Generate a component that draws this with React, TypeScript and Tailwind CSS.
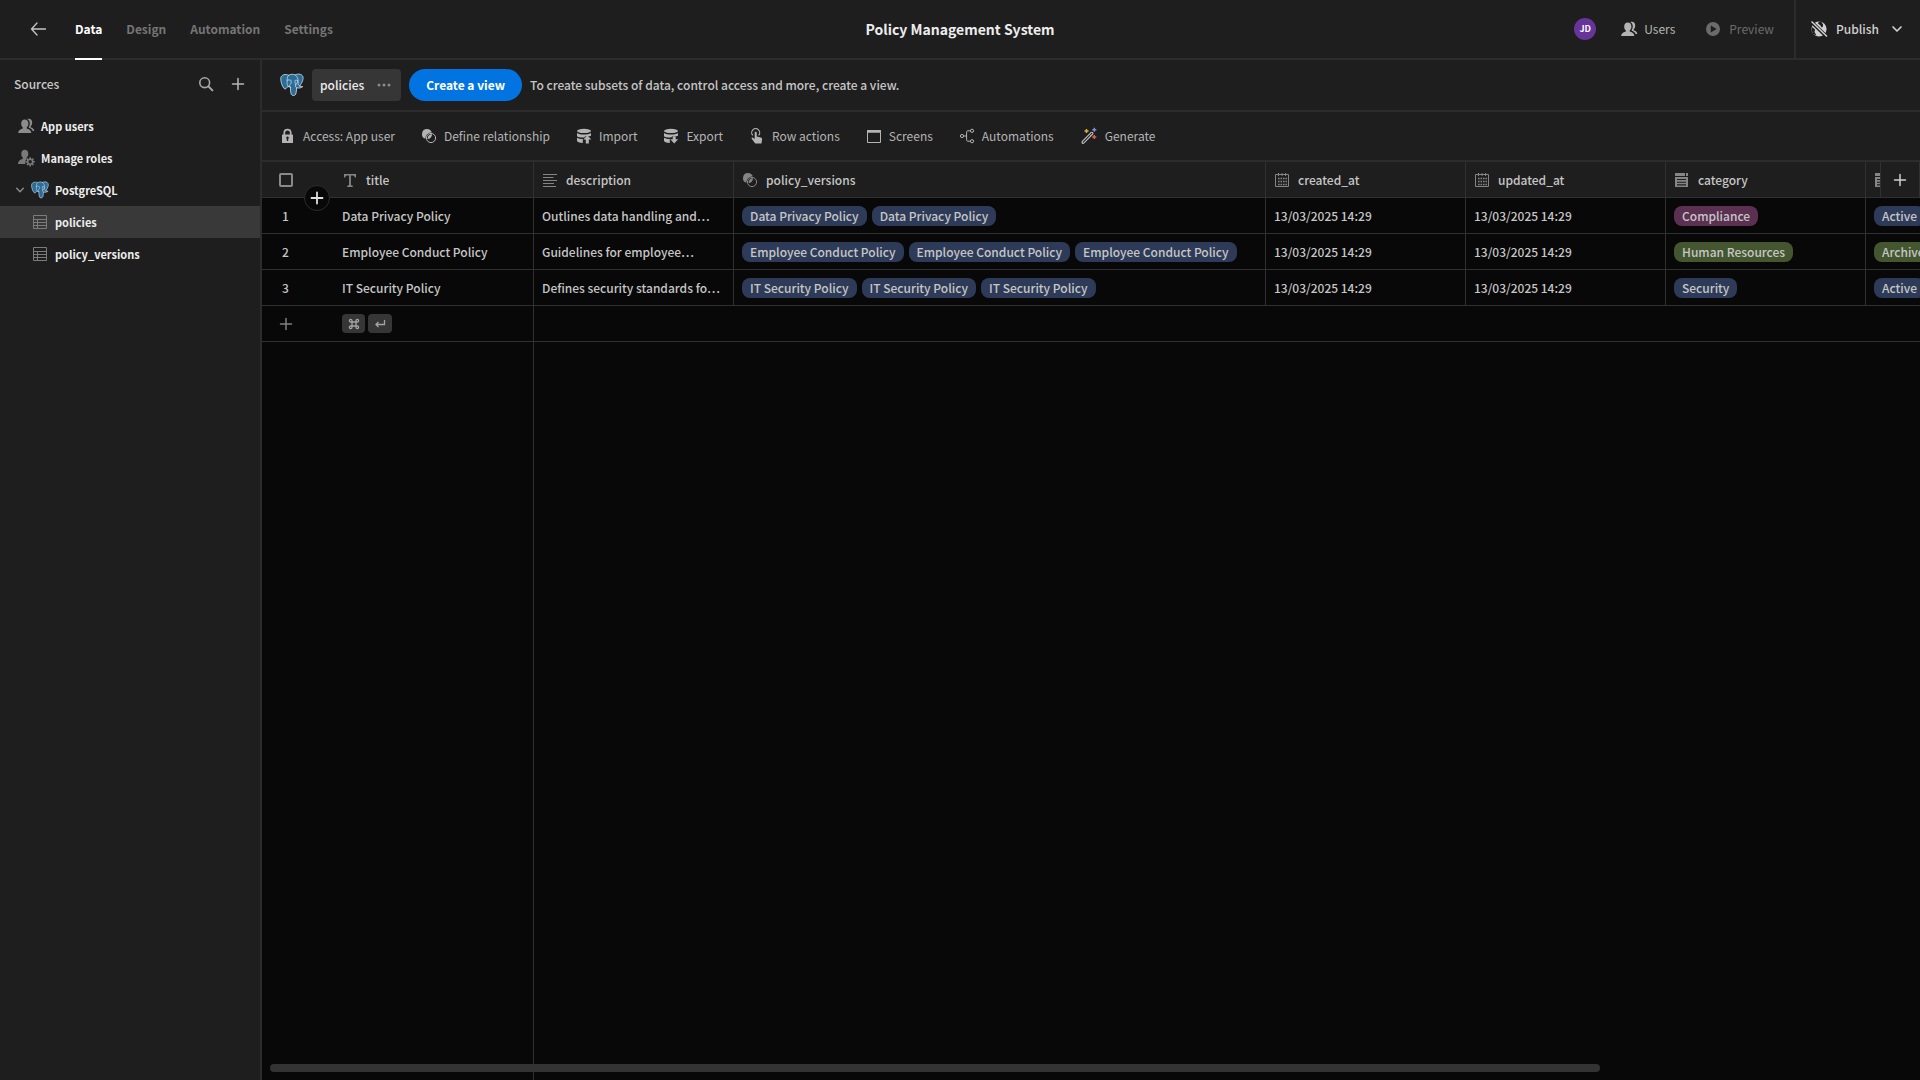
import type { ReactNode } from 'react';

type IconProps = { className?: string };

const FONT = "font-['Noto_Sans_CJK_SC','Open_Sans',sans-serif]";

function PostgresLogo({ className = '' }: IconProps) {
  return (
    <svg viewBox="0 0 24 24" fill="none" className={`shrink-0 ${className}`} aria-hidden="true">
      <path
        d="M8.6 2.2C5.6.8 1.4 1.4.8 5c-.4 3 1.400 8.600 3.200 10.400 1 .9 1.900.5 2.700-.5l1.300-1.500c.8.700 1.700.7 2.500.7 0 2.500-.1 5 .8 7.300.6 1.500 3.700 1.600 4.500-.3.7-1.900.6-4.500.8-6.300 2.300.5 4.600.2 6.200-1.200-1 .1-2.400.2-3.100-.4C22 9.500 24 5.800 22.700 3.200 21.300.7 17.600.7 15.200 1.900 13 .9 10.700 1.200 8.600 2.200Z"
        fill="#2c6d98"
        stroke="#d5e3ec"
        strokeWidth=".8"
        strokeLinejoin="round"
      />
      <path
        d="M8.600 2.200C6.900 4 7.200 7 7.100 9.200 7 10.700 7.300 12.400 8 13.400M15.200 1.900c2.200 1.500 3.200 4.300 2.900 6.800-.2 1.700-.1 3.300 1.600 4.500M10.500 14.100c-1.700-.2-1.800-1.700-.6-2.300 1.200-.7 1.500-1.800 1.200-4.300-.9-.7-2.900-.9-4-.1M16.600 14.800c-1-.6-1.700-1.300-.9-2.600.6-1.300 1.800-2.500 2.300-4.500-1-.7-2.200-.6-3.200 0 .1 1.700.5 3 .900 4.500"
        stroke="#d5e3ec"
        strokeWidth=".7"
        strokeLinecap="round"
      />
    </svg>
  );
}

function UsersIcon({ className = '' }: IconProps) {
  return (
    <svg viewBox="0 0 18 18" fill="currentColor" className={`shrink-0 ${className}`} aria-hidden="true">
      <path d="M7.800 2.600c2.100 0 3.600 1.500 3.600 3.900 0 1.700-.6 3-1.500 3.800-.5.5-.3 1.300.3 1.500 2.300.7 4 1.700 4.100 4.200H1.200c.1-2.500 1.800-3.500 4.100-4.200.7-.2.800-1 .3-1.500-.9-.8-1.400-2.100-1.400-3.800 0-2.400 1.500-3.900 3.600-3.900Z" />
      <path d="M10.200 2.100c.5-.3 1.100-.4 1.700-.4 2 0 3.300 1.500 3.300 3.700 0 1.600-.5 2.700-1.300 3.600-.5.5-.3 1.200.3 1.400 1.800.6 2.900 1.500 3.100 3.600h-1.700c-.6-1.700-2-2.600-3.700-3.200l-.3-.7c.8-1 1.200-2.200 1.200-3.600 0-1.900-.9-3.500-2.600-4.400Z" />
    </svg>
  );
}

function RolesIcon({ className = '' }: IconProps) {
  return (
    <svg viewBox="0 0 18 18" fill="currentColor" className={`shrink-0 ${className}`} aria-hidden="true">
      <path d="M7.800.8c2 0 3.500 1.500 3.500 3.900 0 1.700-.6 3-1.500 3.800-.4.4-.3 1.100 0 1.500-1.400 1.300-1.800 3-1.400 5H1c0-2.800 1.700-4.400 4.300-5.100.7-.2.800-.9.3-1.400-.8-.8-1.300-2.100-1.300-3.800C4.300 2.300 5.800.8 7.800.8Z" />
      <circle cx="13.200" cy="12.800" r="2.500" fill="none" stroke="currentColor" strokeWidth="1.600" />
      <path
        d="M13.200 8.200v1.700M13.200 15.700v1.700M8.600 12.800h1.700M16.100 12.800h1.700M9.950 9.550l1.200 1.200M15.250 14.850l1.200 1.200M16.450 9.550l-1.200 1.200M11.150 14.850l-1.200 1.200"
        stroke="currentColor"
        strokeWidth="1.600"
      />
    </svg>
  );
}

function PlusIcon({ className = '', weight = 1.5 }: IconProps & { weight?: number }) {
  return (
    <svg viewBox="0 0 16 16" fill="none" stroke="currentColor" strokeWidth={weight} strokeLinecap="round" className={`shrink-0 ${className}`} aria-hidden="true">
      <path d="M8 2.500v11M2.500 8h11" />
    </svg>
  );
}

function ChevronIcon({ className = '' }: IconProps) {
  return (
    <svg viewBox="0 0 12 12" fill="none" stroke="currentColor" strokeWidth="1.700" strokeLinecap="round" strokeLinejoin="round" className={`shrink-0 ${className}`} aria-hidden="true">
      <path d="m2 4 4 4 4-4" />
    </svg>
  );
}

function TableIcon() {
  return (
    <svg viewBox="0 0 16 16" fill="none" stroke="currentColor" className="size-4 shrink-0" aria-hidden="true">
      <path d="M1.500 1.500h13v13h-13zM1.500 5.500h13M1.500 8.500h13M1.500 11.500h13M5.500 5.500v9" />
    </svg>
  );
}

function LockIcon() {
  return (
    <svg viewBox="0 0 16 16" className="size-4 shrink-0" aria-hidden="true">
      <path d="M4.300 7V4.800a3.200 3.200 0 0 1 6.400 0V7" fill="none" stroke="currentColor" strokeWidth="1.700" />
      <path
        fillRule="evenodd"
        fill="currentColor"
        d="M2.600 6.500h9.800c.4 0 .6.3.6.600v7.300c0 .4-.2.600-.6.600H2.600c-.4 0-.6-.2-.6-.6V7.100c0-.3.200-.6.600-.6Zm4.900 2a1.300 1.300 0 0 0-.7 2.400v2.200h1.400v-2.200a1.300 1.300 0 0 0-.7-2.400Z"
      />
    </svg>
  );
}

function RelationIcon() {
  return (
    <svg viewBox="0 0 16 16" className="size-4 shrink-0" aria-hidden="true">
      <path
        d="M6 1a5 5 0 0 0-1.700 9.700A5.800 5.800 0 0 1 10.800 4.600 5 5 0 0 0 6 1Z"
        fill="currentColor"
      />
      <circle cx="10" cy="10" r="4.600" fill="none" stroke="currentColor" />
      <path d="M11 6.300c.1 2.600-1.800 4.700-4.400 4.800C6.400 8.300 8.300 6.200 11 6.300Z" fill="currentColor" />
    </svg>
  );
}

// Database drum with an arrow: up for import, down for export
function DataIcon({ down = false }: { down?: boolean }) {
  return (
    <svg viewBox="0 0 16 16" fill="currentColor" className="size-4 shrink-0" aria-hidden="true">
      <ellipse cx="8" cy="2.900" rx="7" ry="2.100" />
      <path d="M1 5c1.600 1.300 4.300 1.600 7 1.600S13.400 6.300 15 5v2.700c-1 .4-2 .5-3 .5L9.500 8.300 8 9.600C5.300 9.700 2.400 9.300 1 8.200Z" />
      <path d="M1 9.800c1.500.9 3.600 1.200 5.800 1.200v3.900C4.200 14.800 1.500 14.300 1 13Z" />
      {down ? <path d="M9.700 8.200h3v3h2.500L11.200 15.500 7.200 11.200h2.500Z" /> : <path d="M11.300 7.300l4 4.200h-2.500v4h-3v-4H7.300Z" />}
    </svg>
  );
}

function TapIcon() {
  return (
    <svg viewBox="0 0 16 16" className="size-4 shrink-0" aria-hidden="true">
      <path
        d="M6.200 15.500 2.700 10.700c-.4-.7.500-1.500 1.200-1l1.800 1.300V4.600c0-1.300 2-1.300 2 0v4l4 .8c1 .2 1.500.8 1.400 1.800l-.6 4.300Z"
        fill="currentColor"
      />
      <path d="M3.800 7.400a4 4 0 1 1 5.800 0" fill="none" stroke="currentColor" strokeWidth="1.100" />
    </svg>
  );
}

function ScreenIcon() {
  return (
    <svg viewBox="0 0 16 16" fill="none" stroke="currentColor" className="size-4 shrink-0" aria-hidden="true">
      <path d="M1.500 2.500h13v12h-13z" />
      <path d="M1 3.500h14" strokeWidth="2.500" />
    </svg>
  );
}

function FlowIcon() {
  return (
    <svg viewBox="0 0 16 16" fill="none" stroke="currentColor" className="size-4 shrink-0" aria-hidden="true">
      <circle cx="3" cy="8" r="1.600" />
      <circle cx="13" cy="2.800" r="1.600" />
      <circle cx="13" cy="13.200" r="1.600" />
      <path d="M4.600 8h3M11.400 2.800H9c-1 0-1.400.5-1.400 1.400v7.600c0 .9.4 1.400 1.400 1.400h2.400" />
    </svg>
  );
}

function WandIcon() {
  return (
    <svg viewBox="0 0 18 18" fill="none" className="size-[18px] shrink-0" aria-hidden="true">
      <path d="M2.400 14.300 11 5.600c1.300-.9 2.500.3 1.600 1.600L4 15.900c-1.200 1.100-2.700-.4-1.600-1.600Z" stroke="#bdbdbd" strokeWidth="1.200" />
      <path d="M9.500 7.300l1.500 1.500" stroke="#bdbdbd" />
      <path d="M6.500 2v4M4.500 4h4" stroke="#d8b148" strokeWidth="1.500" />
      <path d="M14.300.8v4M12.300 2.800h4" stroke="#7d8be0" strokeWidth="1.500" />
      <path d="M14.300 8v4M12.300 10h4" stroke="#dd614e" strokeWidth="1.500" />
    </svg>
  );
}

function TextTypeIcon() {
  return (
    <svg viewBox="0 0 16 16" fill="currentColor" className="size-4 shrink-0" aria-hidden="true">
      <path d="M2 2h12v3.500h-1.200C12.600 4 12 3.400 10.500 3.400H8.900v9.200c0 .7.300.9 1.800 1V15H5.300v-1.400c1.500-.1 1.800-.3 1.800-1V3.400H5.500C4 3.400 3.400 4 3.200 5.500H2Z" />
    </svg>
  );
}

function LongTextIcon() {
  return (
    <svg viewBox="0 0 16 16" stroke="currentColor" strokeWidth="1.200" className="size-4 shrink-0" aria-hidden="true">
      <path d="M1 2.500h14M1 5.500h10.500M1 8.500h14M1 11.500h11M1 14.500h13" />
    </svg>
  );
}

function CalendarIcon() {
  return (
    <svg viewBox="0 0 16 16" fill="none" stroke="currentColor" className="size-4 shrink-0" aria-hidden="true">
      <path d="M1.500 2.500h13v12h-13zM4.500 1v3M8 1v3M11.500 1v3" />
      <path d="M4 6.500h9M4 9.500h9M4 12.500h9" strokeWidth="1.600" strokeDasharray="1.600 .9" />
    </svg>
  );
}

function OptionsIcon() {
  return (
    <svg viewBox="0 0 16 16" className="size-4 shrink-0" aria-hidden="true">
      <path d="M1 1h10v3H1zM12 1h2v3h-2z" fill="currentColor" />
      <path d="M1 5h13v10H1z" fill="currentColor" />
      <path d="M3 7.500h9M3 10.200h9M3 12.900h9" stroke="#1e1e1e" strokeWidth="1.100" />
    </svg>
  );
}

function SearchIcon() {
  return (
    <svg viewBox="0 0 16 16" fill="none" stroke="currentColor" strokeLinecap="round" className="size-4 shrink-0" aria-hidden="true">
      <circle cx="6.700" cy="6.700" r="4.900" strokeWidth="1.600" />
      <path d="m10.400 10.400 4 4" strokeWidth="2" />
    </svg>
  );
}

function PlayIcon() {
  return (
    <svg viewBox="0 0 16 16" fill="currentColor" className="size-4 shrink-0" aria-hidden="true">
      <path fillRule="evenodd" d="M8 1a7 7 0 1 1 0 14A7 7 0 0 1 8 1ZM5.800 4.600v6.800L11.600 8Z" />
    </svg>
  );
}

// Globe with a slash, the app is not published yet
function GlobeStrikeIcon() {
  return (
    <svg viewBox="0 0 18 18" className="size-[18px] shrink-0" aria-hidden="true">
      <circle cx="9" cy="9" r="7.600" fill="currentColor" />
      <path d="M9 1.500 8 3.500l2.500 2 1 2 1.500-1L13 4.500 11.500 2ZM2 7l3 2.500-.5 2.500 2 3.500L3 14l-1.500-4Z" fill="#1e1e1e" />
      <path d="M1 1.500l15.500 15" stroke="#1e1e1e" strokeWidth="3.600" />
      <path d="M1.500 1.500l15.500 15" stroke="currentColor" strokeWidth="1.500" />
    </svg>
  );
}

const tools = [
  { label: 'Access: App user', icon: <LockIcon /> },
  { label: 'Define relationship', icon: <RelationIcon /> },
  { label: 'Import', icon: <DataIcon /> },
  { label: 'Export', icon: <DataIcon down /> },
  { label: 'Row actions', icon: <TapIcon /> },
  { label: 'Screens', icon: <ScreenIcon /> },
  { label: 'Automations', icon: <FlowIcon /> },
  { label: 'Generate', icon: <WandIcon /> },
];

const columns = [
  { name: 'title', icon: <TextTypeIcon /> },
  { name: 'description', icon: <LongTextIcon /> },
  { name: 'policy_versions', icon: <RelationIcon /> },
  { name: 'created_at', icon: <CalendarIcon /> },
  { name: 'updated_at', icon: <CalendarIcon /> },
  { name: 'category', icon: <OptionsIcon /> },
  { name: 'status', icon: <OptionsIcon /> },
];

const pillColors = {
  blue: 'bg-[#2e3b58]',
  purple: 'bg-[#5b3051]',
  green: 'bg-[#44562f]',
};

type PillColor = keyof typeof pillColors;

interface Row {
  title: string;
  description: string;
  versions: number;
  date: string;
  category: [string, PillColor];
  status: [string, PillColor];
}

const rows: Row[] = [
  { title: 'Data Privacy Policy', description: 'Outlines data handling and…', versions: 2, date: '13/03/2025 14:29', category: ['Compliance', 'purple'], status: ['Active', 'blue'] },
  { title: 'Employee Conduct Policy', description: 'Guidelines for employee…', versions: 3, date: '13/03/2025 14:29', category: ['Human Resources', 'green'], status: ['Archived', 'green'] },
  { title: 'IT Security Policy', description: 'Defines security standards fo…', versions: 3, date: '13/03/2025 14:29', category: ['Security', 'blue'], status: ['Active', 'blue'] },
];

function Pill({ color, children }: { color: PillColor; children: ReactNode }) {
  return <span className={`h-5 rounded-lg px-2 leading-5 ${pillColors[color]}`}>{children}</span>;
}

function Cell({ children, last = false }: { children: ReactNode; last?: boolean }) {
  return (
    <td className={`h-9 border-b border-[#303030] p-0 ${last ? '' : 'border-r'}`}>
      <div className="flex items-center gap-[5px] overflow-hidden px-2 whitespace-nowrap">{children}</div>
    </td>
  );
}

function TopBar() {
  return (
    <header className="grid h-[60px] shrink-0 grid-cols-[1fr_auto_1fr] border-b-2 border-[#2c2c2c]">
      <div className="flex items-center pl-[30px]">
        <button aria-label="Back" className="mr-7 text-[#c4c4c4]">
          <svg viewBox="0 0 17 16" fill="none" stroke="currentColor" strokeWidth="1.300" strokeLinecap="round" strokeLinejoin="round" className="h-4 w-[17px]">
            <path d="M7 2 1.500 8 7 14M1.500 8h14" />
          </svg>
        </button>
        <nav className="-mb-0.5 flex gap-6 self-stretch font-bold text-[#757575]">
          <a href="#data" className="flex items-center border-b-2 border-white text-white">Data</a>
          <a href="#design" className="flex items-center border-b-2 border-transparent">Design</a>
          <a href="#automation" className="flex items-center border-b-2 border-transparent">Automation</a>
          <a href="#settings" className="flex items-center border-b-2 border-transparent">Settings</a>
        </nav>
      </div>
      <h1 className="self-center text-sm font-bold text-[#ededed]">Policy Management System</h1>
      <div className="flex items-center justify-end">
        <span className="mr-6 flex size-[22px] items-center justify-center rounded-full bg-[#673499] text-[9px] font-bold text-white">JD</span>
        <button className="mr-[30px] flex items-center gap-1.5 text-[#b4b4b4]">
          <UsersIcon className="size-[18px]" />
          Users
        </button>
        <button disabled className="mr-5 flex items-center gap-2 text-[#6b6b6b]">
          <PlayIcon />
          Preview
        </button>
        <button className="flex items-center gap-2 self-stretch border-l-2 border-[#2c2c2c] pr-[17px] pl-3.5 font-medium text-[#d0d0d0]">
          <GlobeStrikeIcon />
          Publish
          <ChevronIcon className="ml-1 size-3" />
        </button>
      </div>
    </header>
  );
}

function Sidebar() {
  return (
    <aside className="w-[262px] shrink-0 border-r-2 border-[#2c2c2c]">
      <div className="mb-0.5 flex h-12 items-center px-3.5 text-[#c8c8c8]">
        <h2 className="grow font-medium">Sources</h2>
        <button aria-label="Search" className="mr-4 text-[#a8a8a8]"><SearchIcon /></button>
        <button aria-label="Add source" className="text-[#b8b8b8]"><PlusIcon className="size-4" /></button>
      </div>
      <nav className="text-[11px] font-bold text-[#ededed]">
        <a href="#users" className="flex h-8 items-center gap-1.5 pl-[17px]">
          <UsersIcon className="size-[18px] text-[#8c8c8c]" />
          App users
        </a>
        <a href="#roles" className="flex h-8 items-center gap-1.5 pl-[17px]">
          <RolesIcon className="size-[18px] text-[#7a7a7a]" />
          Manage roles
        </a>
        <a href="#postgresql" className="flex h-8 items-center pl-[15px]">
          <ChevronIcon className="mr-1.5 size-2.5 text-[#8c8c8c]" />
          <PostgresLogo className="mr-1.5 size-[18px]" />
          PostgreSQL
        </a>
        <a href="#policies" className="flex h-8 items-center gap-[7px] bg-[#393939] pl-8">
          <span className="text-[#7c7c7c]"><TableIcon /></span>
          policies
        </a>
        <a href="#policy_versions" className="flex h-8 items-center gap-[7px] pl-8">
          <span className="text-[#7c7c7c]"><TableIcon /></span>
          policy_versions
        </a>
      </nav>
    </aside>
  );
}

function Grid() {
  return (
    <section className="relative flex min-h-0 grow flex-col overflow-hidden bg-[#080808]">
      <table className="w-[2004px] shrink-0 table-fixed border-separate border-spacing-0 text-left font-medium text-[#c6c6c6]">
        <colgroup>
          <col className="w-[72px]" />
          <col className="w-[200px]" />
          <col className="w-[200px]" />
          <col className="w-[532px]" />
          <col className="w-[200px]" />
          <col className="w-[200px]" />
          <col className="w-[200px]" />
          <col className="w-[400px]" />
        </colgroup>
        <thead>
          <tr className="bg-[#1e1e1e]">
            <th className="h-9 border-b border-[#303030] p-0 pl-[17px]">
              <input type="checkbox" aria-label="Select all rows" className="block size-3.5 appearance-none rounded-xs border-2 border-[#8a8a8a]" />
            </th>
            {columns.map(({ name, icon }) => (
              <th key={name} className="h-9 border-r border-b border-[#303030] p-0 font-medium">
                <div className="flex items-center gap-2 pl-2">
                  <span className="text-[#858585]">{icon}</span>
                  {name}
                </div>
              </th>
            ))}
          </tr>
        </thead>
        <tbody>
          {rows.map((row, i) => (
            <tr key={row.title}>
              <td className="h-9 border-b border-[#303030] p-0 pl-5">{i + 1}</td>
              <Cell>{row.title}</Cell>
              <Cell>{row.description}</Cell>
              <Cell>
                {Array.from({ length: row.versions }, (_, n) => (
                  <Pill key={n} color="blue">{row.title}</Pill>
                ))}
              </Cell>
              <Cell>{row.date}</Cell>
              <Cell>{row.date}</Cell>
              <Cell><Pill color={row.category[1]}>{row.category[0]}</Pill></Cell>
              <Cell last><Pill color={row.status[1]}>{row.status[0]}</Pill></Cell>
            </tr>
          ))}
          <tr>
            <td className="h-9 border-b border-[#303030] p-0 pl-4">
              <button aria-label="Add row" className="block text-[#808080]"><PlusIcon className="size-4" /></button>
            </td>
            <Cell>
              <kbd className="flex h-[19px] w-[23px] items-center justify-center rounded-sm bg-[#363636] text-[#a5a5a5]">
                <svg viewBox="0 0 12 12" fill="none" stroke="currentColor" strokeWidth="1.300" className="size-3" aria-label="Command">
                  <path d="M4 4h4v4H4zM4 4H2.700A1.300 1.300 0 1 1 4 2.700ZM8 4V2.700A1.300 1.300 0 1 1 9.300 4ZM8 8h1.300A1.300 1.300 0 1 1 8 9.300ZM4 8v1.300A1.300 1.300 0 1 1 2.700 8Z" />
                </svg>
              </kbd>
              <kbd className="-ml-0.5 flex h-[19px] w-6 items-center justify-center rounded-sm bg-[#363636] text-[#a5a5a5]">
                <svg viewBox="0 0 12 12" fill="none" stroke="currentColor" strokeWidth="1.300" className="size-3" aria-label="Enter">
                  <path d="M10.500 2v4.500H2M4.500 4 2 6.500 4.500 9" />
                </svg>
              </kbd>
            </Cell>
            <td colSpan={6} className="border-b border-[#303030]" />
          </tr>
        </tbody>
      </table>
      <div className="w-[272px] grow border-r border-[#303030]" />
      <button aria-label="Insert row" className="absolute top-[23px] left-[42px] flex size-[26px] items-center justify-center rounded-full border border-[#2c2c2c] bg-[#080808] text-[#e0e0e0]">
        <PlusIcon className="size-4" weight={1.8} />
      </button>
      <button aria-label="Add column" className="absolute top-0 right-0 flex h-9 w-10 items-center justify-center border-x border-b border-[#303030] bg-[#1e1e1e] text-[#d0d0d0]">
        <PlusIcon className="size-4" />
      </button>
      <div className="absolute inset-x-2 bottom-2">
        <div className="h-2 w-[81%] rounded-full bg-[#333333]" />
      </div>
    </section>
  );
}

export default function App() {
  return (
    <div className={`flex h-screen flex-col overflow-hidden bg-[#1e1e1e] text-[12px] leading-5 ${FONT}`}>
      <TopBar />
      <div className="flex min-h-0 grow">
        <Sidebar />
        <main className="flex min-w-0 grow flex-col">
          <div className="flex h-[52px] shrink-0 items-center border-b-2 border-[#2c2c2c] pl-[18px]">
            <PostgresLogo className="mr-2 size-6" />
            <div className="flex h-8 items-center rounded bg-[#363636] px-2 font-medium text-[#ededed]">
              policies
              <button aria-label="View options" className="ml-[11px] text-[#8a8a8a]">
                <svg viewBox="0 0 18 16" fill="currentColor" className="h-4 w-[18px]">
                  <circle cx="4" cy="8" r="1.500" />
                  <circle cx="9" cy="8" r="1.500" />
                  <circle cx="14" cy="8" r="1.500" />
                </svg>
              </button>
            </div>
            <button className="mx-2 h-8 rounded-full bg-[#0274e2] px-[17px] font-bold text-white">Create a view</button>
            <p className="font-medium text-[#c6c6c6]">To create subsets of data, control access and more, create a view.</p>
          </div>
          <div className="flex h-[50px] shrink-0 items-center gap-[26px] border-b-2 border-[#2c2c2c] pl-[18px] text-[#b4b4b4]">
            {tools.map(({ label, icon }) => (
              <button key={label} className="flex items-center gap-[7px]">
                {icon}
                {label}
              </button>
            ))}
          </div>
          <Grid />
        </main>
      </div>
    </div>
  );
}
